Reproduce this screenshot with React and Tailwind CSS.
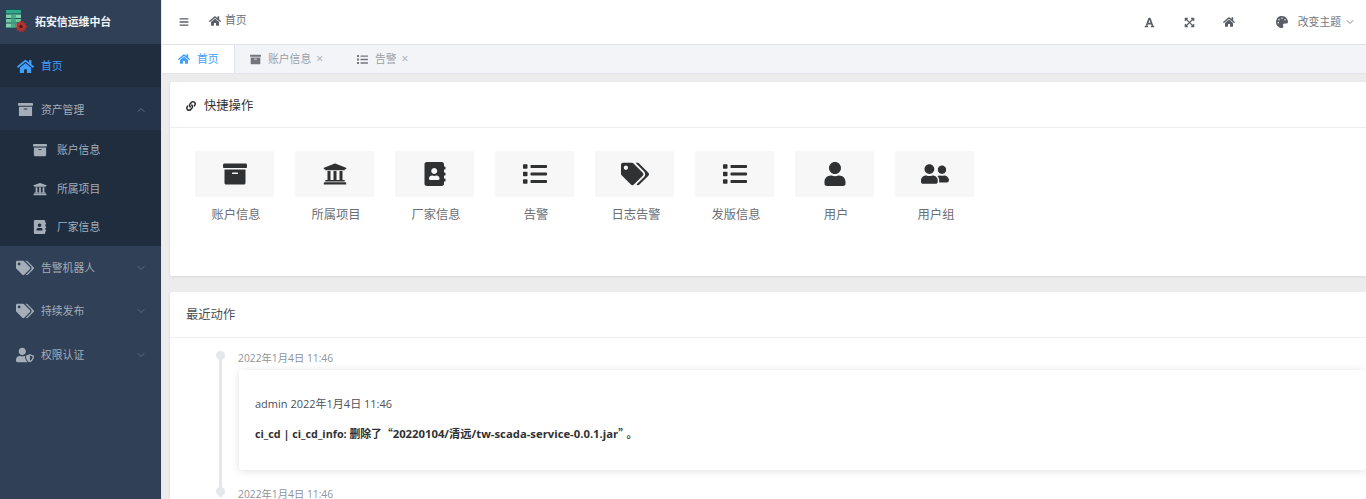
import React from "react";
import { FaHome, FaArchive, FaUniversity, FaAddressBook, FaList, FaTags, FaUser, FaUserFriends, FaUserShield, FaLink, FaBars, FaFont, FaExpandArrowsAlt, FaPalette } from "react-icons/fa";
import { FiChevronDown, FiChevronUp } from "react-icons/fi";

const font = { fontFamily: '"Open Sans","Noto Sans CJK SC",sans-serif' };

function Logo() {
  return (
    <svg width="26" height="32" viewBox="0 0 26 32" className="shrink-0">
      <rect x="1" y="2.5" width="17" height="20.5" rx="1.5" fill="#1d4a55" />
      <rect x="2" y="4" width="15" height="3.5" fill="#2fa98a" />
      <rect x="2" y="8.5" width="15" height="3.5" fill="#7fd4ae" />
      <rect x="2" y="13" width="15" height="3.5" fill="#6ccba3" />
      <rect x="2" y="17.5" width="15" height="4" fill="#7fd4ae" />
      <rect x="7" y="8.5" width="5" height="13" fill="#3a9c80" opacity="0.75" />
      <circle cx="17" cy="20.5" r="4.6" fill="#b5322e" />
      <circle cx="17" cy="20.5" r="5.2" fill="none" stroke="#b5322e" strokeWidth="1.2" strokeDasharray="1.4 1.4" />
      <circle cx="17" cy="20.5" r="1.7" fill="#4a1c20" />
    </svg>
  );
}

function SideItem({ icon: Icon, label, open, size = 18 }) {
  return (
    <div className="h-[43.5px] flex items-center pl-[16px] pr-[14px] text-[#a4adb8]">
      <span className="w-[18px] flex justify-center"><Icon size={size} /></span>
      <span className="ml-[7px] text-[10.8px] flex-1">{label}</span>
      {open ? <FiChevronUp size={12} className="text-[#5f6d7e]" /> : <FiChevronDown size={12} className="text-[#5f6d7e]" />}
    </div>
  );
}

function SubItem({ icon: Icon, label }) {
  return (
    <div className="h-[38.6px] flex items-center pl-[33px] text-[#a4adb8]">
      <span className="w-[14px] flex justify-center"><Icon size={14} /></span>
      <span className="ml-[10px] text-[10.8px]">{label}</span>
    </div>
  );
}

function Tab({ icon: Icon, label }) {
  return (
    <div className="h-full flex items-center text-[#9a9fa6] text-[10.8px]">
      <Icon size={11} className="text-[#73777d]" />
      <span className="ml-[7px]">{label}</span>
      <span className="ml-[5px] text-[12px] text-[#a5a9af] leading-none">×</span>
    </div>
  );
}

function Quick({ icon: Icon, label, size = 24 }) {
  return (
    <div className="w-[79px] flex flex-col items-center">
      <div className="w-[79px] h-[46px] bg-[#f7f7f7] flex items-center justify-center text-[#303133]">
        <Icon size={size} />
      </div>
      <div className="mt-[9px] pl-[3px] text-[12.3px] leading-[18px] text-[#6b6e73]">{label}</div>
    </div>
  );
}

function Entry({ last }) {
  return (
    <div className="relative pl-[69px]">
      <div className="absolute left-[46px] top-[0px] w-[9px] h-[9px] rounded-full bg-[#e4e7ed]" />
      {!last && <div className="absolute left-[49px] top-[6px] w-[3px] h-[140px] bg-[#e4e7ed]" />}
      <div className="-ml-[1px] h-[14px] text-[10.3px] leading-[14px] text-[#909399]">2022年1月4日 11:46</div>
      {!last && (
        <div className="mt-[5px] h-[100px] rounded-[3px] bg-white shadow-[0_1px_8px_rgba(0,0,0,0.12)] pl-[16px] pt-[26px]">
          <div className="text-[11px] leading-[16px] text-[#4d5055]">admin 2022年1月4日 11:46</div>
          <div className="mt-[13px] text-[10.8px] leading-[16px] font-bold text-[#303133]">
            ci_cd | ci_cd_info: 删除了<span className="font-['Noto_Sans_CJK_SC']">“</span><span className="text-[11.3px]">20220104/清远/tw-scada-service-0.0.1.jar</span><span className="font-['Noto_Sans_CJK_SC'] mr-[3px]">”</span>。
          </div>
        </div>
      )}
    </div>
  );
}

export default function App() {
  return (
    <div style={font} className="w-[1366px] h-[499px] overflow-hidden flex bg-[#ececec]">
      <aside className="w-[162px] shrink-0 h-full bg-[#304056] border-r border-[#e8e8e8]">
        <div className="h-[44px] flex items-center pl-[4px]">
          <Logo />
          <span className="ml-[5px] text-[10.9px] font-bold text-[#f2f4f6]">拓安信运维中台</span>
        </div>
        <div className="h-[43px] pt-[1px] bg-[#1f2d3f] flex items-center pl-[16px] text-[#409eff]">
          <span className="w-[18px] flex justify-center"><FaHome size={17} /></span>
          <span className="ml-[7px] text-[10.8px]">首页</span>
        </div>
        <div className="bg-[#263449] h-[43px] pt-[1px]">
          <SideItem icon={FaArchive} label="资产管理" open size={15} />
        </div>
        <div className="bg-[#1f2d3f] h-[116px] pt-[1px]">
          <SubItem icon={FaArchive} label="账户信息" />
          <SubItem icon={FaUniversity} label="所属项目" />
          <SubItem icon={FaAddressBook} label="厂家信息" />
        </div>
        <SideItem icon={FaTags} label="告警机器人" />
        <SideItem icon={FaTags} label="持续发布" />
        <SideItem icon={FaUserShield} label="权限认证" />
      </aside>
      <main className="flex-1 min-w-0 flex flex-col">
        <header className="h-[45px] shrink-0 bg-white border-b border-[#dfe2e8] flex items-center pl-[17px] pr-[10px] text-[#5a5e66]">
          <FaBars size={10} />
          <FaHome size={12} className="ml-[20px] -mt-[3px]" />
          <span className="ml-[4px] text-[10.8px] text-[#6d7076] -mt-[3px]">首页</span>
          <div className="ml-auto flex items-center">
            <FaFont size={11} />
            <FaExpandArrowsAlt size={11} className="ml-[29px]" />
            <FaHome size={12} className="ml-[28px]" />
            <FaPalette size={12} className="ml-[41px]" />
            <span className="ml-[10px] text-[10.8px] text-[#75787e]">改变主题</span>
            <FiChevronDown size={12} className="ml-[3px] text-[#8a8d92]" />
          </div>
        </header>
        <nav className="h-[29px] shrink-0 bg-[#f3f4f8] border-b border-[#e2e4ea] flex items-center">
          <div className="w-[73px] h-full bg-white border-r border-[#dfe2e8] flex items-center pl-[16px] text-[#409eff] text-[10.8px]">
            <FaHome size={12} />
            <span className="ml-[7px]">首页</span>
          </div>
          <div className="ml-[15px] w-[107px] h-full"><Tab icon={FaArchive} label="账户信息" /></div>
          <div className="h-full"><Tab icon={FaList} label="告警" /></div>
        </nav>
        <div className="flex-1 min-h-0 pt-[8px] pl-[8px] overflow-hidden flex flex-col gap-[16px]">
          <section className="h-[194px] shrink-0 bg-white rounded-l-[2px] shadow-[0_1px_3px_rgba(0,0,0,0.08)]">
            <div className="h-[46px] pt-[3px] border-b border-[#ededed] flex items-center pl-[16px] text-[12.3px] text-[#303133]">
              <FaLink size={10} />
              <span className="ml-[8px]">快捷操作</span>
            </div>
            <div className="pt-[23px] pl-[25px] flex gap-[21px]">
              <Quick icon={FaArchive} label="账户信息" />
              <Quick icon={FaUniversity} label="所属项目" />
              <Quick icon={FaAddressBook} label="厂家信息" />
              <Quick icon={FaList} label="告警" />
              <Quick icon={FaTags} label="日志告警" size={28} />
              <Quick icon={FaList} label="发版信息" />
              <Quick icon={FaUser} label="用户" />
              <Quick icon={FaUserFriends} label="用户组" size={28} />
            </div>
          </section>
          <section className="flex-1 bg-white rounded-l-[2px] shadow-[0_1px_3px_rgba(0,0,0,0.08)]">
            <div className="h-[46px] pt-[1px] border-b border-[#f0f0f2] flex items-center pl-[16px] text-[12.3px] text-[#4a4d52]">最近动作</div>
            <div className="pt-[13px] flex flex-col gap-[17px]">
              <Entry />
              <Entry last />
            </div>
          </section>
        </div>
      </main>
    </div>
  );
}
